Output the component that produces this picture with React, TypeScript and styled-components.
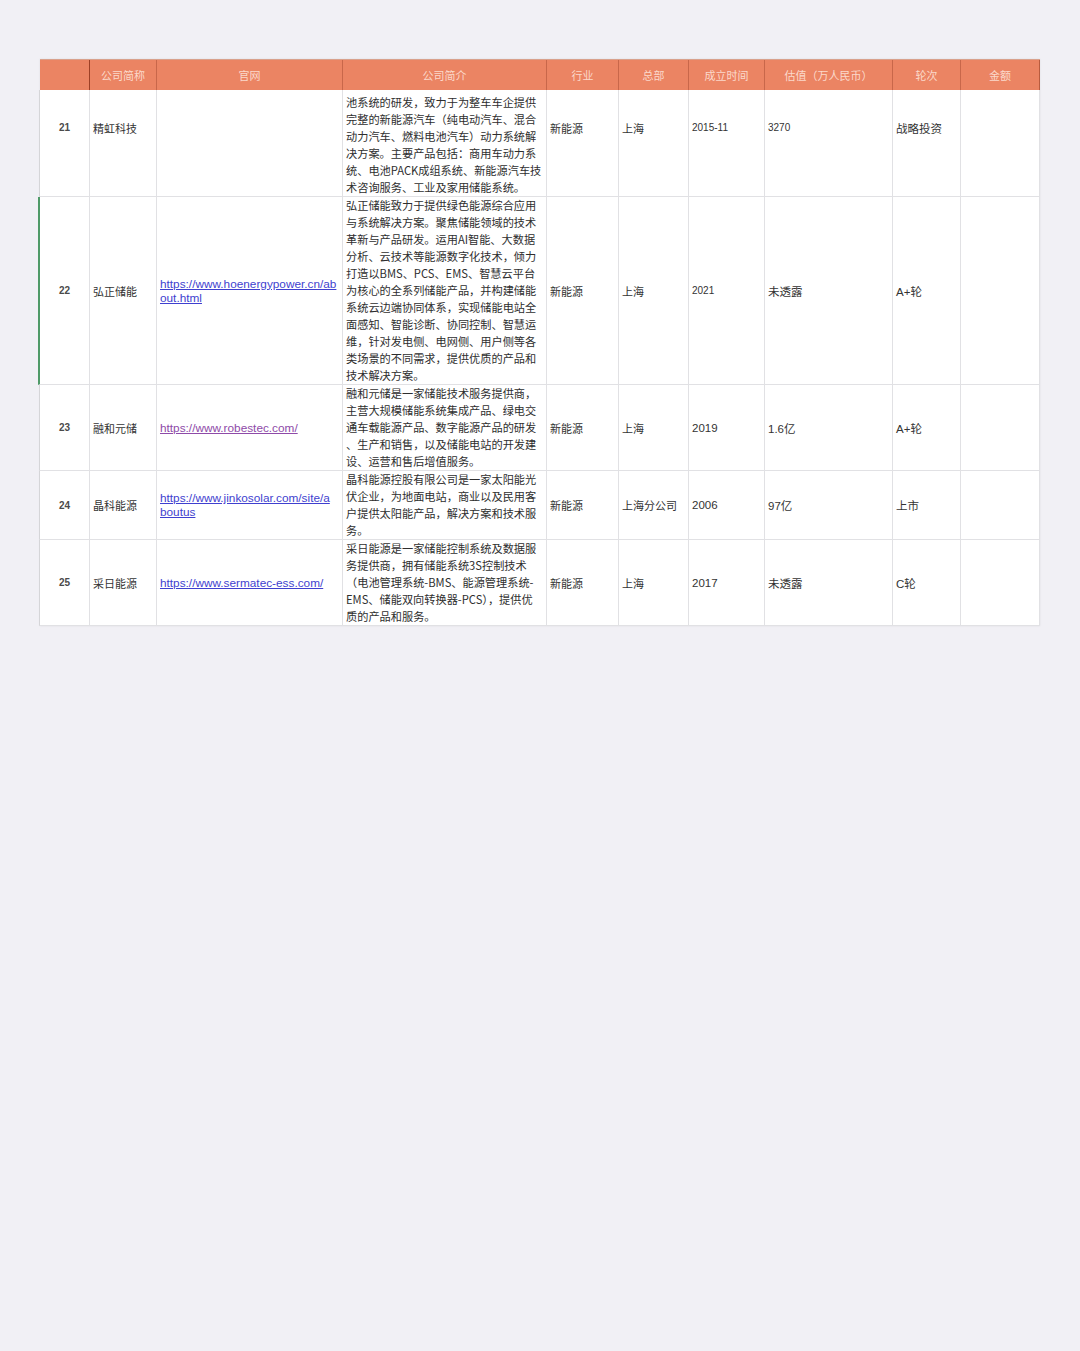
import React from "react";
import styled, { createGlobalStyle } from "styled-components";

const Global = createGlobalStyle`
  html, body { margin: 0; padding: 0; background: #f1f0f5; }
  body { font-family: "Noto Sans CJK SC", "Liberation Sans", sans-serif; }
`;

const Page = styled.div`
  width: 1080px;
  min-height: 1351px;
  background: #f1f0f5;
  padding: 59px 40px 0 40px;
  box-sizing: border-box;
`;

const COLS = "50px 67px 186px 204px 72px 70px 76px 128px 68px 79px";

const Table = styled.div`
  width: 1000px;
  background: #ffffff;
  box-shadow: 0 0 2px rgba(0, 0, 0, 0.08);
`;

const HeaderRow = styled.div`
  display: grid;
  grid-template-columns: ${COLS};
  height: 31px;
  background: #eb8463;
  border-top: 1px solid #d9a18c;
  box-sizing: border-box;
`;

const HeadCell = styled.div`
  display: flex;
  align-items: center;
  justify-content: center;
  font-size: 11px;
  color: #fbd9cb;
  border-right: 1px solid #c8674a;
  &:first-child {
    border-right: 1px solid #9c4026;
  }
  &:last-child {
    border-right: 1px solid #b85b3e;
  }
`;

const Row = styled.div<{ $accent?: boolean }>`
  display: grid;
  grid-template-columns: ${COLS};
  border-left: ${(p) => (p.$accent ? "2px solid #4f9a68" : "1px solid #d5d5d8")};
  border-bottom: 1px solid #e1e1e4;
  margin-left: ${(p) => (p.$accent ? "-2px" : "-1px")};
`;

const Cell = styled.div<{ $shift?: number; $center?: boolean }>`
  display: flex;
  align-items: center;
  justify-content: ${(p) => (p.$center ? "center" : "flex-start")};
  padding: 0 3px ${(p) => p.$shift ?? 0}px 3px;
  border-right: 1px solid #e1e1e4;
  font-size: 11px;
  color: #333333;
  min-width: 0;
`;

const NumText = styled.span`
  font-family: "Liberation Sans", Arial, sans-serif;
  font-size: 10px;
  font-weight: 700;
  color: #4a4a4a;
`;

const Value = styled.span<{ $big?: boolean }>`
  font-family: "Liberation Sans", "Noto Sans CJK SC", sans-serif;
  font-size: ${(p) => (p.$big ? "11.5px" : "10px")};
  color: #333;
  white-space: nowrap;
`;

const CnText = styled.span`
  font-family: "Noto Sans CJK SC", sans-serif;
  font-size: 11px;
  color: #333;
  white-space: nowrap;
`;

const Desc = styled.div<{ $top?: number }>`
  padding: ${(p) => p.$top ?? 0}px 2px 0 3px;
  border-right: 1px solid #e1e1e4;
  font-family: "Noto Sans CJK SC", sans-serif;
  font-size: 11.2px;
  line-height: 17px;
  color: #2e2e2e;
`;

const Line = styled.span`
  display: block;
  white-space: nowrap;
`;

const Link = styled.a<{ $visited?: boolean }>`
  display: block;
  font-family: "Liberation Sans", Arial, sans-serif;
  font-size: 11.8px;
  line-height: 14px;
  color: ${(p) => (p.$visited ? "#8e4aa8" : "#3f3fcf")};
  text-decoration: underline;
  white-space: nowrap;
`;

const LinkWrap = styled.div`
  display: flex;
  flex-direction: column;
`;

const headers = ["", "公司简称", "官网", "公司简介", "行业", "总部", "成立时间", "估值（万人民币）", "轮次", "金额"];

type RowData = {
  no: string;
  name: string;
  link?: string[];
  visited?: boolean;
  desc: string[];
  industry: string;
  hq: string;
  year: string;
  yearBig?: boolean;
  value: string;
  valueBig?: boolean;
  round: string;
  top?: number;
  shift?: number;
  accent?: boolean;
};

const rows: RowData[] = [
  {
    no: "21",
    name: "精虹科技",
    desc: [
      "池系统的研发，致力于为整车车企提供",
      "完整的新能源汽车（纯电动汽车、混合",
      "动力汽车、燃料电池汽车）动力系统解",
      "决方案。主要产品包括：商用车动力系",
      "统、电池PACK成组系统、新能源汽车技",
      "术咨询服务、工业及家用储能系统。",
    ],
    industry: "新能源",
    hq: "上海",
    year: "2015-11",
    value: "3270",
    round: "战略投资",
    top: 4,
    shift: 31,
  },
  {
    no: "22",
    name: "弘正储能",
    link: ["https://www.hoenergypower.cn/ab", "out.html"],
    desc: [
      "弘正储能致力于提供绿色能源综合应用",
      "与系统解决方案。聚焦储能领域的技术",
      "革新与产品研发。运用AI智能、大数据",
      "分析、云技术等能源数字化技术，倾力",
      "打造以BMS、PCS、EMS、智慧云平台",
      "为核心的全系列储能产品，并构建储能",
      "系统云边端协同体系，实现储能电站全",
      "面感知、智能诊断、协同控制、智慧运",
      "维，针对发电侧、电网侧、用户侧等各",
      "类场景的不同需求，提供优质的产品和",
      "技术解决方案。",
    ],
    industry: "新能源",
    hq: "上海",
    year: "2021",
    value: "未透露",
    valueBig: true,
    round: "A+轮",
    accent: true,
  },
  {
    no: "23",
    name: "融和元储",
    link: ["https://www.robestec.com/"],
    visited: true,
    desc: [
      "融和元储是一家储能技术服务提供商，",
      "主营大规模储能系统集成产品、绿电交",
      "通车载能源产品、数字能源产品的研发",
      "、生产和销售，以及储能电站的开发建",
      "设、运营和售后增值服务。",
    ],
    industry: "新能源",
    hq: "上海",
    year: "2019",
    yearBig: true,
    value: "1.6亿",
    valueBig: true,
    round: "A+轮",
  },
  {
    no: "24",
    name: "晶科能源",
    link: ["https://www.jinkosolar.com/site/a", "boutus"],
    desc: [
      "晶科能源控股有限公司是一家太阳能光",
      "伏企业，为地面电站，商业以及民用客",
      "户提供太阳能产品，解决方案和技术服",
      "务。",
    ],
    industry: "新能源",
    hq: "上海分公司",
    year: "2006",
    yearBig: true,
    value: "97亿",
    valueBig: true,
    round: "上市",
  },
  {
    no: "25",
    name: "采日能源",
    link: ["https://www.sermatec-ess.com/"],
    desc: [
      "采日能源是一家储能控制系统及数据服",
      "务提供商，拥有储能系统3S控制技术",
      "（电池管理系统-BMS、能源管理系统-",
      "EMS、储能双向转换器-PCS），提供优",
      "质的产品和服务。",
    ],
    industry: "新能源",
    hq: "上海",
    year: "2017",
    yearBig: true,
    value: "未透露",
    valueBig: true,
    round: "C轮",
  },
];

export default function App() {
  return (
    <>
      <Global />
      <Page>
        <Table>
          <HeaderRow>
            {headers.map((h, i) => (
              <HeadCell key={i}>{h}</HeadCell>
            ))}
          </HeaderRow>
          {rows.map((r) => (
            <Row key={r.no} $accent={r.accent}>
              <Cell $center $shift={r.shift}>
                <NumText>{r.no}</NumText>
              </Cell>
              <Cell $shift={r.shift}>
                <CnText>{r.name}</CnText>
              </Cell>
              <Cell $shift={r.shift}>
                {r.link && (
                  <LinkWrap>
                    {r.link.map((l, i) => (
                      <Link key={i} $visited={r.visited} href="#">
                        {l}
                      </Link>
                    ))}
                  </LinkWrap>
                )}
              </Cell>
              <Desc $top={r.top}>
                {r.desc.map((d, i) => (
                  <Line key={i}>{d}</Line>
                ))}
              </Desc>
              <Cell $shift={r.shift}>
                <CnText>{r.industry}</CnText>
              </Cell>
              <Cell $shift={r.shift}>
                <CnText>{r.hq}</CnText>
              </Cell>
              <Cell $shift={r.shift}>
                <Value $big={r.yearBig}>{r.year}</Value>
              </Cell>
              <Cell $shift={r.shift}>
                <Value $big={r.valueBig}>{r.value}</Value>
              </Cell>
              <Cell $shift={r.shift}>
                <Value $big>{r.round}</Value>
              </Cell>
              <Cell $shift={r.shift} />
            </Row>
          ))}
        </Table>
      </Page>
    </>
  );
}
